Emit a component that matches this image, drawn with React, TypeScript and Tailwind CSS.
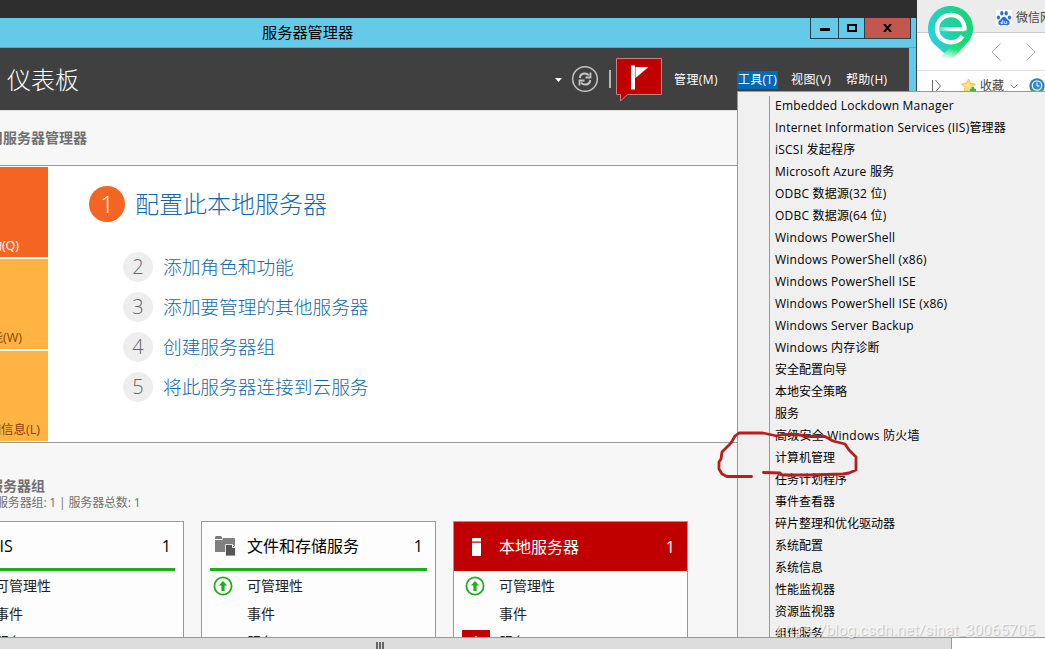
import { clsx } from 'clsx'

const toolItems = [
  { label: 'Embedded Lockdown Manager', latin: true },
  { label: 'Internet Information Services (IIS)管理器', latin: true },
  { label: 'iSCSI 发起程序', latin: true },
  { label: 'Microsoft Azure 服务', latin: true },
  { label: 'ODBC 数据源(32 位)', latin: true },
  { label: 'ODBC 数据源(64 位)', latin: true },
  { label: 'Windows PowerShell', latin: true },
  { label: 'Windows PowerShell (x86)', latin: true },
  { label: 'Windows PowerShell ISE', latin: true },
  { label: 'Windows PowerShell ISE (x86)', latin: true },
  { label: 'Windows Server Backup', latin: true },
  { label: 'Windows 内存诊断', latin: true },
  { label: '安全配置向导' },
  { label: '本地安全策略' },
  { label: '服务' },
  { label: '高级安全 Windows 防火墙', latin: true },
  { label: '计算机管理' },
  { label: '任务计划程序' },
  { label: '事件查看器' },
  { label: '碎片整理和优化驱动器' },
  { label: '系统配置' },
  { label: '系统信息' },
  { label: '性能监视器' },
  { label: '资源监视器' },
  { label: '组件服务' },
]

const steps = [
  { n: 2, label: '添加角色和功能' },
  { n: 3, label: '添加要管理的其他服务器' },
  { n: 4, label: '创建服务器组' },
  { n: 5, label: '将此服务器连接到云服务' },
]

export default function App() {
  return (
    <div className="relative flex h-[649px] w-[1045px] flex-col overflow-hidden bg-white font-['Open_Sans','Noto_Sans_CJK_SC',sans-serif] whitespace-nowrap">
      <div className="flex h-[637px] overflow-hidden">
        <div className="flex w-[917px] flex-col bg-[#2e2e2e]">
          <div className="h-[18px] shrink-0" />
          <div className="flex flex-1 flex-col border-r border-[#2c4a55] bg-[#65caea]">
            <TitleBar />
            <div className="mr-[7px] flex flex-1 flex-col bg-[#f7f7f7]">
              <Header />
              <Dashboard />
            </div>
          </div>
        </div>
        <Browser />
      </div>

      {/* Horizontal scrollbar */}
      <div className="flex h-3 w-[952px] border-t border-r border-[#999] bg-[#ddd] pt-1 pl-[376px]">
        <div className="flex gap-px">
          <div className="h-[7px] w-0.5 bg-[#666]" />
          <div className="h-[7px] w-0.5 bg-[#666]" />
          <div className="h-[7px] w-0.5 bg-[#666]" />
        </div>
      </div>

      <ToolsMenu />
      <Annotation />
      <div className="absolute top-[619px] left-[776px] font-['Roboto',sans-serif] text-[15.4px] leading-[22px] text-white/70 [text-shadow:1px_1px_1px_rgba(0,0,0,0.22)]">
        https://blog.csdn.net/sinat_30065705
      </div>
    </div>
  )
}

function TitleBar() {
  return (
    <div className="flex h-[30px] shrink-0 justify-between border-b border-[#5aa9c2]">
      <div className="pl-[262px] text-[15.2px] leading-[29px] text-black">服务器管理器</div>
      <div className="mr-[5px] flex h-[21px] border border-t-0 border-[#22414c]">
        <div className="flex w-[28px] items-end justify-center border-r border-[#22414c] pb-[7px]">
          <div className="h-[3px] w-[10px] bg-black" />
        </div>
        <div className="flex w-[26px] items-center justify-center border-r border-[#22414c]">
          <div className="h-2 w-[10px] border-2 border-black" />
        </div>
        <div className="flex w-[45px] items-center justify-center bg-[#c2574d]">
          <svg width="9" height="8" viewBox="0 0 9 8" className="stroke-black" fill="none" strokeWidth="2">
            <path d="M1 0 8 8M8 0 1 8" />
          </svg>
        </div>
      </div>
    </div>
  )
}

function Header() {
  return (
    <div className="flex h-[62px] shrink-0 items-center bg-[#404040] text-xs text-white">
      <div className="w-[555px] pt-0.5 pl-[7px] text-2xl font-light">仪表板</div>
      <svg className="mt-0.5" width="8" height="5" viewBox="0 0 8 5" fill="#fff">
        <path d="M0 0h7L3.500 4z" />
      </svg>
      <svg className="ml-[8px] shrink-0" width="28" height="28" viewBox="0 0 28 28" fill="none" stroke="#c4c4c4">
        <circle cx="14" cy="14" r="12.300" strokeWidth="1.500" />
        <path d="M8.700 13c.4-3 2.400-4.600 5.200-4.600 1.700 0 3 .7 4 2" strokeWidth="2" />
        <path d="M19.500 7.500v5h-5" strokeWidth="1.800" />
        <path d="M19.300 15c-.4 3-2.400 4.600-5.200 4.600-1.700 0-3-.7-4-2" strokeWidth="2" />
        <path d="M8.500 20.500v-5h5" strokeWidth="1.800" />
      </svg>
      <div className="ml-[10px] h-[18px] w-0.5 bg-[#b5b5b5]" />
      <svg className="mt-px ml-[5px] shrink-0" width="47" height="46" viewBox="0 0 47 46">
        <path d="M.5 1.500h45v36H11.500L4.500 44V37.500H.5z" fill="#c00000" stroke="#c98080" />
        <path d="M15 8.500h4v24h-4z" fill="#fff" />
        <path d="M19.500 10h13L19.500 21z" fill="#fff" />
      </svg>
      <div className="mt-0.5 ml-[11px] w-[63px] tracking-[0.4px]">管理(M)</div>
      <div className="mt-px h-[18px] w-[41px] bg-[#0069b4] text-center leading-[18px] tracking-[0.3px]">工具(T)</div>
      <div className="mt-0.5 ml-[13px] w-[55px] tracking-[0.4px]">视图(V)</div>
      <div className="mt-0.5 tracking-[0.3px]">帮助(H)</div>
    </div>
  )
}

function Dashboard() {
  return (
    <div className="flex flex-1 flex-col border-t border-[#ddd]">
      <div className="-ml-[11px] pt-[17px] pb-[17px] text-sm leading-5 font-bold text-[#707070]">用服务器管理器</div>

      <div className="flex h-[278px] shrink-0 border-y border-[#999] bg-white">
        <div className="flex w-12 flex-col gap-0.5 overflow-hidden pt-px text-[12.5px] leading-[22px]">
          <div className="flex h-[90px] items-end justify-end bg-[#f46523] pr-[29px] text-white">启动(Q)</div>
          <div className="flex h-[90px] items-end justify-end bg-[#ffb343] pr-[26px] text-[#8a4208]">新增功能(W)</div>
          <div className="flex h-[90px] items-end justify-end bg-[#ffb343] pr-2 text-[#8a4208]">详细信息(L)</div>
        </div>
        <div className="pt-5 pl-[41px] font-light text-[#1268a8]">
          <div className="flex items-center gap-[10px] text-2xl leading-9">
            <div className="h-9 w-9 rounded-full bg-[#f26522] text-center text-white">1</div>
            配置此本地服务器
          </div>
          <div className="mt-[30px] flex flex-col gap-[10px] pl-[34px] text-[18.7px] leading-[30px]">
            {steps.map((step) => (
              <div key={step.n} className="flex gap-[10px]">
                <div className="size-[30px] rounded-full bg-[#eee] text-center text-[20px] text-[#666]">{step.n}</div>
                {step.label}
              </div>
            ))}
          </div>
        </div>
      </div>

      <div className="-ml-[11px] pt-[33px] text-sm leading-5 font-bold text-[#707070]">服务器组</div>
      <div className="-ml-1 h-[25px] text-xs leading-[14px] tracking-[-0.15px] text-[#707070]">
        服务器组: 1 | 服务器总数: 1
      </div>

      <div className="-ml-[51px] flex h-[116px] gap-[17px] overflow-hidden">
        <ServerCard title="IIS" />
        <ServerCard title="文件和存储服务" icon={<FilesIcon />} />
        <ServerCard title="本地服务器" icon={<ServerIcon />} alert />
      </div>
    </div>
  )
}

function ServerCard({ title, icon, alert }: { title: string; icon?: React.ReactNode; alert?: boolean }) {
  return (
    <div className="h-[150px] w-[235px] shrink-0 border border-[#999] bg-[#fdfdfd]">
      <div
        className={clsx(
          'flex h-[49px] items-center text-base',
          alert ? 'bg-[#c00000] pr-3 text-white' : 'mx-2 border-b-[3px] border-[#1cae1c] pt-[2px] pr-1 text-black',
        )}
      >
        <div className={alert ? 'w-[45px] pl-[18px]' : 'w-[37px] pl-[5px]'}>{icon}</div>
        <div className="flex-1">{title}</div>
        <div>1</div>
      </div>
      <div className="flex flex-col pt-px text-sm leading-7 text-[#222]">
        <div className="flex h-7 items-center">
          <div className="w-[45px] pl-[11px]">
            <UpIcon />
          </div>
          可管理性
        </div>
        <div className="pl-[45px]">事件</div>
        <div className="flex">
          <div className="w-[45px] pl-2">
            {alert && <div className="mt-[2px] h-5 w-7 bg-[#c00000] text-center leading-[22px] text-white">1</div>}
          </div>
          服务
        </div>
      </div>
    </div>
  )
}

function UpIcon() {
  return (
    <svg width="20" height="20" viewBox="0 0 20 20">
      <circle cx="10" cy="10" r="8.600" fill="#fff" stroke="#1cae1c" strokeWidth="1.800" />
      <path d="M10 5 5.800 9.500h2.600V15h3.200V9.500h2.600z" fill="#1cae1c" />
    </svg>
  )
}

function FilesIcon() {
  return (
    <svg width="21" height="20" viewBox="0 0 21 20">
      <path d="M0 1.500Q0 0 1.500 0h4Q7 0 7 1.500V3H0z" fill="#777" />
      <path d="M0 4h7.500V2H19q1 0 1 1v13H0z" fill="#808080" />
      <path d="M10.500 8.500h7l3 3V20h-10z" fill="#555" stroke="#fff" strokeWidth=".8" />
      <path d="M17.500 8.500v3h3" fill="none" stroke="#fff" />
    </svg>
  )
}

function ServerIcon() {
  return (
    <svg width="10" height="18" viewBox="0 0 10 18" fill="#fff">
      <path d="M0 0h9v3.500H0zM0 4.700h9V18H0z" />
    </svg>
  )
}

function Browser() {
  return (
    <div className="relative flex flex-1 flex-col overflow-hidden bg-white text-xs text-[#444]">
      <div className="flex h-[33px] shrink-0 items-center border-b border-[#ccc] bg-[#ececec] pt-[3px] pl-[79px]">
        <svg width="16" height="16" viewBox="0 0 16 16" className="mr-1 shrink-0 bg-white" fill="#2b6de0">
          <ellipse cx="2.500" cy="7.500" rx="1.600" ry="2.100" />
          <ellipse cx="5.800" cy="3.300" rx="1.600" ry="2.200" />
          <ellipse cx="10.200" cy="3.300" rx="1.600" ry="2.200" />
          <ellipse cx="13.500" cy="7.500" rx="1.600" ry="2.100" />
          <path d="M8 6.800c1.700 0 2.300 1.500 3.400 2.600 1.300 1.200 2.500 2 2.200 3.800-.3 1.700-1.800 2.300-3.400 2-1.500-.3-2.900-.3-4.400 0-1.600.3-3.100-.3-3.400-2-.3-1.800.9-2.600 2.200-3.800C5.700 8.300 6.300 6.800 8 6.800z" />
          <path d="M6.800 10v3.500H5q-.8-1.700 1.800-1.800M8.700 11.200v2.300h2v-2.300" fill="none" stroke="#fff" strokeWidth=".8" />
        </svg>
        微信网
      </div>
      <div className="flex h-[38px] shrink-0 items-center gap-[25px] border-b border-[#ddd] pl-[74px]">
        <svg width="10" height="18" viewBox="0 0 10 18" fill="none" stroke="#aaa" className="shrink-0">
          <path d="M9.500.5 1 9l8.500 8.500" />
        </svg>
        <svg width="10" height="18" viewBox="0 0 10 18" fill="none" stroke="#aaa" className="shrink-0">
          <path d="M.5.500 9 9 .5 17.500" />
        </svg>
      </div>
      <div className="flex h-[30px] shrink-0 items-center pl-[15px]">
        <svg width="10" height="12" viewBox="0 0 10 12" fill="none" stroke="#666">
          <path d="M.5 0v12M3.500 0 8.500 6l-5 6" />
        </svg>
        <svg width="16" height="16" viewBox="0 0 16 16" className="ml-[19px] shrink-0">
          <path d="m7.500 1 2.200 4.500 4.800.6-3.500 3.500.8 4.900-4.300-2.300-4.400 2.300.9-4.900L.6 6.100l4.800-.6z" fill="#ffe07a" stroke="#eebf55" />
          <path d="M12 9v6M9 12h6" stroke="#35b558" strokeWidth="2.500" />
        </svg>
        <span className="ml-[3px]">收藏</span>
        <svg width="8" height="5" viewBox="0 0 8 5" className="ml-[6px] shrink-0" fill="none" stroke="#777">
          <path d="m.5.500 3.500 3.500L7.500.5" />
        </svg>
        <svg width="16" height="16" viewBox="0 0 16 16" className="ml-[11px] shrink-0">
          <circle cx="8" cy="8" r="7.700" fill="#2a84c6" />
          <path d="M1 10.500a7.500 7.500 0 0 0 14 0z" fill="#4c9a5c" />
          <circle cx="8" cy="7.500" r="4.700" fill="#2d8fd0" stroke="#e4f3fb" strokeWidth="1.300" />
          <path d="M8 4.500V8h2.500" fill="none" stroke="#fff" />
        </svg>
      </div>

      <svg className="absolute top-[5px] left-[10px]" width="48" height="58" viewBox="0 0 48 58">
        <defs>
          <linearGradient id="pin" x1="0" y1=".6" x2="1" y2=".3">
            <stop offset="0" stopColor="#2bcfe0" />
            <stop offset=".5" stopColor="#20d2a0" />
            <stop offset="1" stopColor="#12d86c" />
          </linearGradient>
          <linearGradient id="tail" x1=".8" y1="0" x2=".35" y2="1">
            <stop offset="0" stopColor="#02e05e" />
            <stop offset=".5" stopColor="#20e27e" />
            <stop offset="1" stopColor="#fff" />
          </linearGradient>
          <linearGradient id="bar" x1="0" y1="0" x2="1" y2="0">
            <stop offset="0" stopColor="#fff" stopOpacity="0.200" />
            <stop offset=".5" stopColor="#fff" />
          </linearGradient>
        </defs>
        <path d="M23.500 1C36 1 46 11 46 23.500c0 6-2.500 11-6 14.500L24 46 17 48 7 39C3 35 1 29.500 1 23.500 1 11 11 1 23.500 1z" fill="url(#pin)" />
        <path d="M43.500 34 27 52.500 10 55 30 36z" fill="url(#tail)" />
        <path d="M37.500 25.500C38 16 32 10 24 10 16 10 10 16 10 23.800 10 31.500 16 37.300 24 37.300c5.500 0 9-2.300 11.500-6" fill="none" stroke="#fff" strokeWidth="4.400" />
        <path d="M12 22.200h25.500v4H12z" fill="url(#bar)" />
      </svg>
    </div>
  )
}

function ToolsMenu() {
  return (
    <div className="absolute top-[91px] left-[737px] flex h-[547px] w-[308px] overflow-hidden border border-r-0 border-[#999] bg-[#f0f0f0] pt-[3px]">
      <div className="mt-px w-8 shrink-0 border-r border-[#999]" />
      <div className="pl-[5px] text-xs leading-[22px] text-black">
        {toolItems.map((item) => (
          <div key={item.label} className={clsx(item.latin && 'tracking-[0.22px]')}>
            {item.label}
          </div>
        ))}
      </div>
    </div>
  )
}

// Freehand marker around 计算机管理
function Annotation() {
  return (
    <svg
      className="absolute top-[428px] left-[714px]"
      width="150"
      height="54"
      viewBox="714 428 150 54"
      fill="none"
      stroke="#bb1c1c"
      strokeWidth="2.800"
      strokeLinecap="round"
      strokeLinejoin="round"
    >
      <path d="M751.500 476.500H727L722 474 719 469V462L721 459 722 452 731 443 735 436 739 433 763 433 777 436 782 434.500 797 434.500 808 436.500H825L833 441 845 444 849 450 856 457V470L849 473 843 474 810 475 782 475 780 473 763.500 472.500" />
    </svg>
  )
}
